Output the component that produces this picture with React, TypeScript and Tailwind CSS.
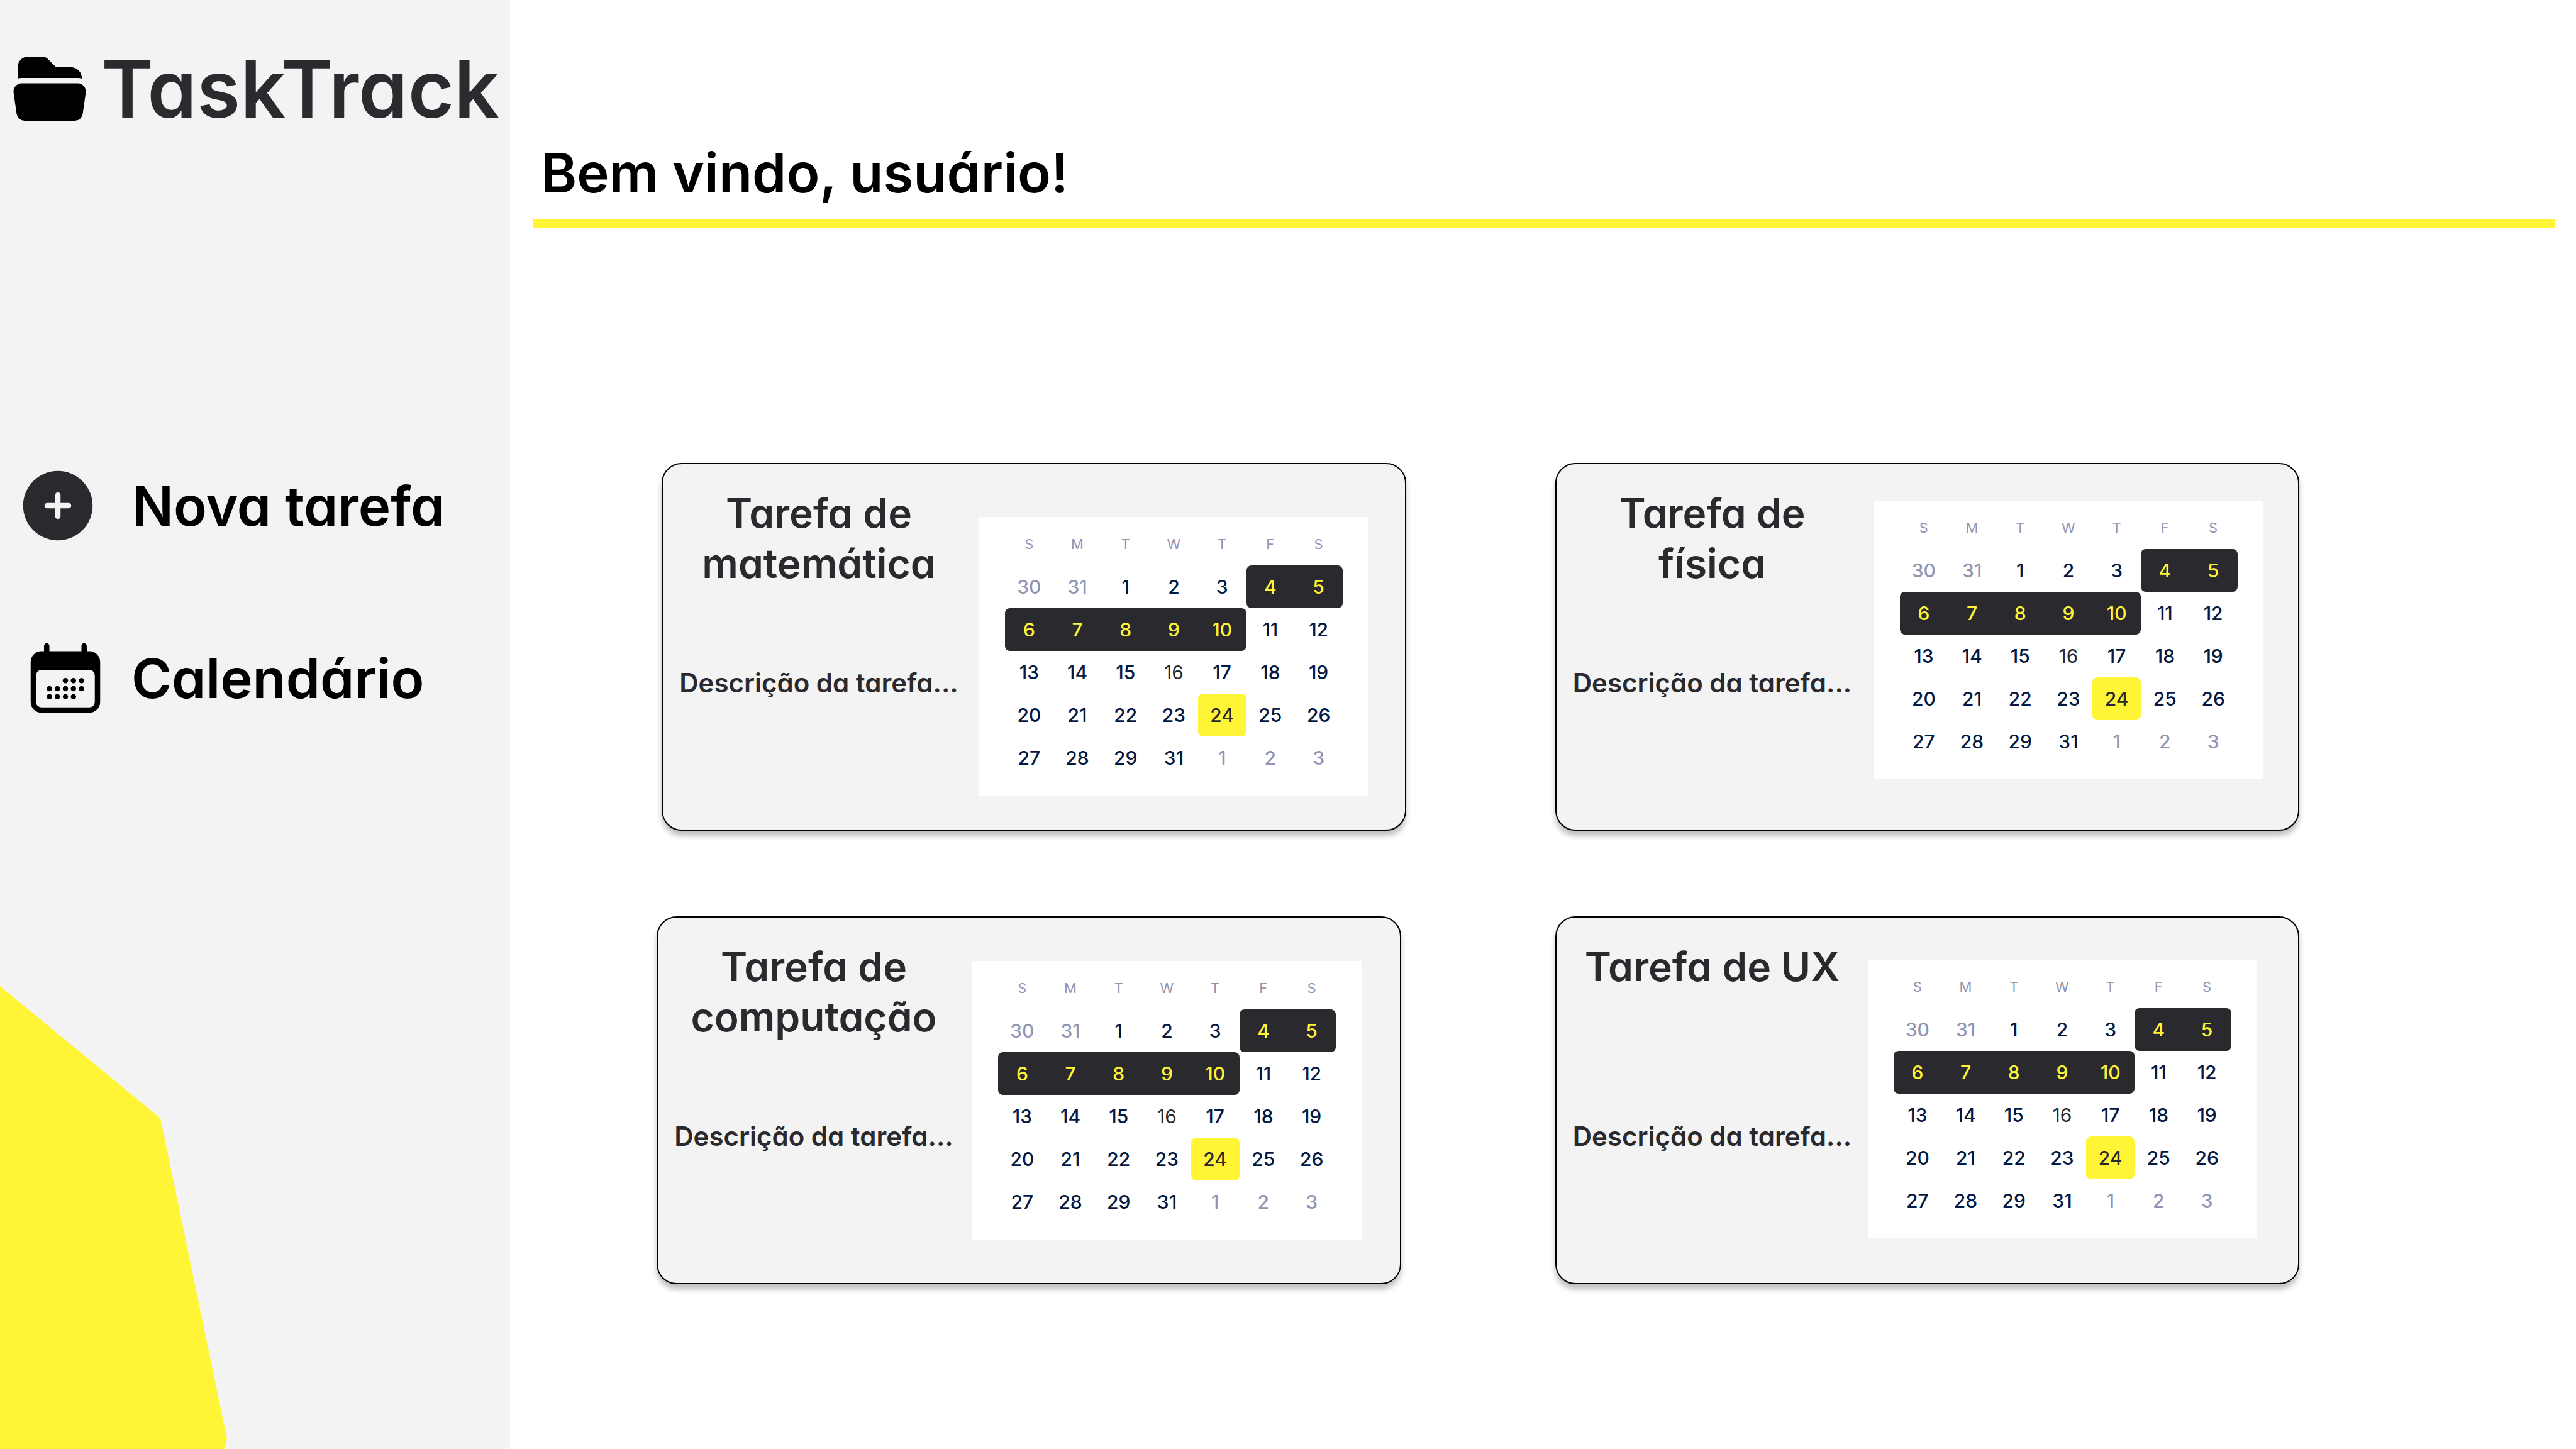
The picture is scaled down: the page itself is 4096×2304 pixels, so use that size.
type Task = {
  id: string;
  title: string;
  description: string;
  calendarClass: string;
};

const rows: { id: string; className: string; tasks: Task[] }[] = [
  {
    id: "first",
    className: "pl-[241px] gap-[237px]",
    tasks: [
      { id: "math", title: "Tarefa de matemática", description: "Descrição da tarefa...", calendarClass: "ml-[7px] mt-[84px]" },
      { id: "physics", title: "Tarefa de física", description: "Descrição da tarefa...", calendarClass: "ml-[9px] mt-[58px]" },
    ],
  },
  {
    id: "second",
    className: "pl-[233px] gap-[245px]",
    tasks: [
      { id: "computing", title: "Tarefa de computação", description: "Descrição da tarefa...", calendarClass: "ml-[4px] mt-[69px]" },
      { id: "ux", title: "Tarefa de UX", description: "Descrição da tarefa...", calendarClass: "-ml-px mt-[67px]" },
    ],
  },
];

type Tone = "muted" | "normal" | "today" | "start" | "middle" | "end" | "selected";

const toneClass: Record<Tone, string> = {
  muted: "text-[#9095b5]",
  normal: "text-[#031842]",
  today: "text-[#2a292e] font-normal",
  start: "bg-[#2a292e] text-[#fff536] rounded-l-[8px]",
  middle: "bg-[#2a292e] text-[#fff536]",
  end: "bg-[#2a292e] text-[#fff536] rounded-r-[8px]",
  selected: "bg-[#fff536] text-[#2a292e] rounded-[8px]",
};

const weekdays = ["S", "M", "T", "W", "T", "F", "S"];

const weeks: [number, Tone][][] = [
  [[30, "muted"], [31, "muted"], [1, "normal"], [2, "normal"], [3, "normal"], [4, "start"], [5, "end"]],
  [[6, "start"], [7, "middle"], [8, "middle"], [9, "middle"], [10, "end"], [11, "normal"], [12, "normal"]],
  [[13, "normal"], [14, "normal"], [15, "normal"], [16, "today"], [17, "normal"], [18, "normal"], [19, "normal"]],
  [[20, "normal"], [21, "normal"], [22, "normal"], [23, "normal"], [24, "selected"], [25, "normal"], [26, "normal"]],
  [[27, "normal"], [28, "normal"], [29, "normal"], [31, "normal"], [1, "muted"], [2, "muted"], [3, "muted"]],
];

function FolderIcon() {
  return (
    <svg viewBox="0 0 24 24" className="size-[136px] shrink-0" fill="currentColor" aria-hidden="true">
      <path d="M19.906 9c.382 0 .749.057 1.094.162V9a3 3 0 0 0-3-3h-3.879a.75.75 0 0 1-.53-.22L11.47 3.66A2.25 2.25 0 0 0 9.879 3H6a3 3 0 0 0-3 3v3.162A3.756 3.756 0 0 1 4.094 9h15.812ZM4.094 10.5a2.25 2.25 0 0 0-2.227 2.568l.857 6A2.25 2.25 0 0 0 4.951 21H19.05a2.25 2.25 0 0 0 2.227-1.932l.857-6a2.25 2.25 0 0 0-2.227-2.568H4.094Z" />
    </svg>
  );
}

function PlusCircleIcon() {
  return (
    <svg viewBox="0 0 24 24" className="size-[136px] shrink-0" aria-hidden="true">
      <circle cx="12" cy="12" r="9.75" fill="#2a292e" />
      <path d="M12 9v6M9 12h6" stroke="#f3f3f3" strokeWidth="1.5" strokeLinecap="round" />
    </svg>
  );
}

function CalendarDaysIcon() {
  const dots = [
    [12, 12.75], [14.25, 12.75], [16.5, 12.75],
    [7.5, 15], [9.75, 15], [12, 15], [14.25, 15], [16.5, 15],
    [7.5, 17.25], [9.75, 17.25], [12, 17.25], [14.25, 17.25],
  ];
  return (
    <svg viewBox="0 0 24 24" className="size-[136px] shrink-0" fill="currentColor" aria-hidden="true">
      <path
        fillRule="evenodd"
        clipRule="evenodd"
        d="M6.75 2.25A.75.75 0 0 1 7.5 3v1.5h9V3A.75.75 0 0 1 18 3v1.5h.75a3 3 0 0 1 3 3v11.25a3 3 0 0 1-3 3H5.25a3 3 0 0 1-3-3V7.5a3 3 0 0 1 3-3H6V3a.75.75 0 0 1 .75-.75Zm13.5 9a1.5 1.5 0 0 0-1.5-1.5H5.25a1.5 1.5 0 0 0-1.5 1.5v7.5a1.5 1.5 0 0 0 1.5 1.5h13.5a1.5 1.5 0 0 0 1.5-1.5v-7.5Z"
      />
      {dots.map(([cx, cy]) => (
        <circle key={`${cx}-${cy}`} cx={cx} cy={cy} r="0.75" />
      ))}
    </svg>
  );
}

function Sidebar() {
  return (
    <aside className="relative w-[811px] shrink-0 overflow-hidden bg-[#f3f3f3]">
      <div className="flex items-center gap-[14px] pl-[11px] pt-[73px]">
        <FolderIcon />
        <span className="whitespace-nowrap text-[126px] leading-none text-[#2a2b2e]">TaskTrack</span>
      </div>
      <nav className="mt-[527px] flex flex-col gap-[138px]">
        <button type="button" className="flex items-center gap-[50px] pl-[24px] text-[87px] font-semibold leading-none">
          <PlusCircleIcon />
          Nova tarefa
        </button>
        <a href="#calendario" className="flex items-center gap-[37px] pl-[36px] text-[87px] leading-none">
          <CalendarDaysIcon />
          Calendário
        </a>
      </nav>
      <svg viewBox="0 0 361 736" className="absolute bottom-0 left-0 w-[361px]" aria-hidden="true">
        <path d="M0 0 255 210 361 720 357 736H0Z" fill="#fff536" />
      </svg>
    </aside>
  );
}

function MonthCalendar({ label }: { label: string }) {
  return (
    <table aria-label={label} className="w-full table-fixed border-collapse text-center text-[30px] font-medium leading-none">
      <thead>
        <tr className="h-[68px] text-[22px] text-[#9095b5]">
          {weekdays.map((day, i) => (
            <th key={i} scope="col" className="p-0 font-normal">{day}</th>
          ))}
        </tr>
      </thead>
      <tbody>
        {weeks.map((week, w) => (
          <tr key={w} className="h-[68px]">
            {week.map(([day, tone]) => (
              <td key={day} className={`p-0 ${toneClass[tone]}`}>{day}</td>
            ))}
          </tr>
        ))}
      </tbody>
    </table>
  );
}

function TaskCard({ task }: { task: Task }) {
  return (
    <article className="flex min-h-[585px] min-w-0 flex-1 items-start rounded-[32px] border-2 border-black bg-[#f3f3f3] text-[#2a292e] shadow-[0_8px_8px_rgba(0,0,0,0.25)]">
      <div className="flex w-[496px] shrink-0 flex-col items-center pt-[38px] text-center">
        <h2 className="min-h-[160px] max-w-[430px] text-[64px] leading-[80px]">{task.title}</h2>
        <p className="mt-[123px] whitespace-nowrap text-[42px] leading-[53px]">{task.description}</p>
      </div>
      <div className={`w-[619px] shrink-0 bg-white px-[41px] pb-[26px] pt-[9px] [font-feature-settings:normal] ${task.calendarClass}`}>
        <MonthCalendar label={task.title} />
      </div>
    </article>
  );
}

export default function App() {
  return (
    <div className="flex min-h-screen bg-white font-['Inter',sans-serif] font-semibold text-black [font-feature-settings:'cv11']">
      <Sidebar />
      <main className="min-w-0 flex-1">
        <header className="ml-[36px] mr-[34px] border-b-[15px] border-[#fff536] pb-[18px] pl-[13px] pt-[220px]">
          <h1 className="text-[87px] leading-[110px]">Bem vindo, usuário!</h1>
        </header>
        <section aria-label="Tarefas" className="mt-[373px] flex flex-col gap-[136px]">
          {rows.map((row) => (
            <div key={row.id} className={`flex pr-[440px] ${row.className}`}>
              {row.tasks.map((task) => (
                <TaskCard key={task.id} task={task} />
              ))}
            </div>
          ))}
        </section>
      </main>
    </div>
  );
}
